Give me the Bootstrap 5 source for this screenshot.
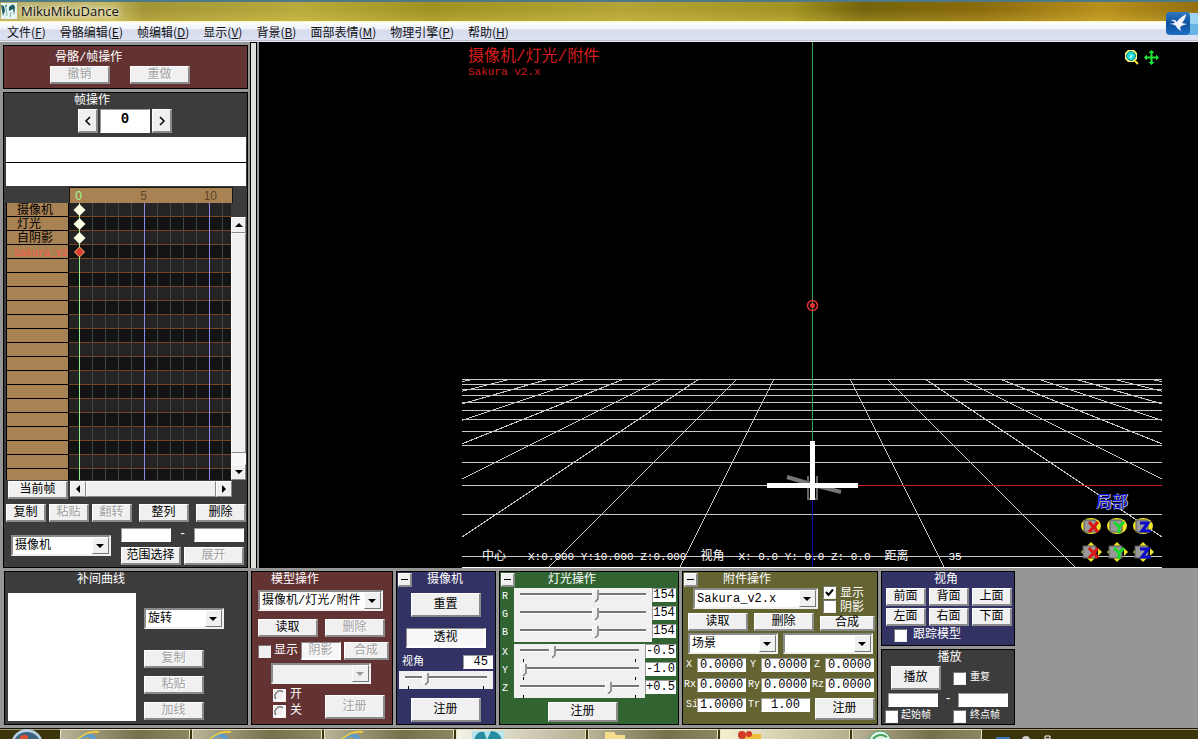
<!DOCTYPE html>
<html lang="zh-CN">
<head>
<meta charset="utf-8">
<meta name="viewport" content="width=device-width, initial-scale=1">
<title>MikuMikuDance</title>
<link href="https://cdn.jsdelivr.net/npm/bootstrap@5.3.0/dist/css/bootstrap.min.css" rel="stylesheet">
<style>
body{font:12px/16px "Liberation Mono","Noto Sans CJK SC",monospace;color:#fff;background:#969696;overflow-x:hidden}
svg{display:block;flex:none}
/* title bar and menu */
.titlebar{height:22px;padding:1px 0 0 1px;border-top:2px solid #4d7a86;border-bottom:1px solid #fff4b8;background:linear-gradient(180deg,transparent 40%,#ffe96a33),linear-gradient(90deg,#b5aa66,#c4b964 9%,#a39537 12%,#b8aa3c 25%,#a09222 36%,#b4a438 52%,#a29322 66%,#75640c 72%,#8b6b0c 82%,#b8901c 92%,#94700f)}
.apptitle{font:13px/16px "Open Sans",sans-serif;color:#111;text-shadow:0 0 5px #fff,0 0 8px #fff}
.menubar{height:20px;background:linear-gradient(#fff,#edf1f9 35%,#d6dbee 40%,#dde2f3 90%,#b0b5c6 91%,#fff)}
.menubar a{font:12px/19px "Noto Sans CJK SC",sans-serif;color:#111;text-decoration:none;padding:0 7px}
.bird{right:0;top:12px;width:33px;height:24px}
/* panels */
.pane{border:1px solid #000;flex:none}
.pane h2{font:inherit;margin:0;height:16px;white-space:nowrap}
.maroon{background:#633232}.dark{background:#3c3c3c}.navy{background:#323264}.green{background:#326432}.olive{background:#646432}
.g3{gap:3px}
.sidecol{width:248px;padding:3px 0 0 3px}
.splitter{width:7px;margin-left:2px;border:1px solid #000;border-bottom:0;background:#e2e0dd}
/* controls */
.key{appearance:none;display:inline-flex;align-items:center;justify-content:center;height:18px;width:60px;padding:0;color:#000;background:#f0f0f0;border:1px solid;border-color:#fff #8a8a8a #8a8a8a #fff;border-right-width:2px;border-bottom-width:2px;white-space:nowrap;flex:none}
.key:disabled{color:#a0a0a0;text-shadow:1px 1px #fff}
.w20{width:20px}.w40{width:40px}.w50{width:50px}.w70{width:70px}.h24{height:24px}
.key.held{border-color:#8a8a8a #fff #fff #8a8a8a;background:#f7f7f7}
.fold{width:14px;height:14px;margin:1px}
.field{height:14px;width:49px;padding:0;border:1px solid;border-color:#999 #fff #fff #999;background:#fff;color:#000;font:inherit;line-height:12px;text-align:center;border-radius:0;flex:none;min-width:0}
.field.wide{width:50px}
.field.rgb{width:24px}
.field.xyz{width:31px}
.combo{position:relative;display:flex;height:21px;border:2px solid;border-color:#8a8a8a #f0f0f0 #f0f0f0 #8a8a8a;background:#fff;flex:none}
.combo select{appearance:none;border:0;background:none;width:100%;padding:0 17px 0 2px;font:inherit;line-height:16px;color:#000;border-radius:0;overflow:hidden}
.combo::before{content:"";position:absolute;right:0;top:0;width:17px;height:17px;background:#f0f0f0;border:1px solid;border-color:#fff #777 #777 #fff;pointer-events:none}
.combo::after{content:"";position:absolute;right:5px;top:7px;border:4px solid transparent;border-top-color:#000;border-bottom:0;pointer-events:none}
.combo.off{background:#f0f0f0}.combo.off::after{border-top-color:#999}
.c80{width:80px}.c90{width:90px}.c100{width:100px}.c125{width:125px}
.tick{appearance:none;width:13px;height:13px;margin:0;background:#fff;border:1px solid;border-color:#777 #eee #eee #777;flex:none}
.tick:checked{background:#fff url("data:image/svg+xml,%3Csvg xmlns='http://www.w3.org/2000/svg' viewBox='0 0 11 11'%3E%3Cpath d='M2 5l2.500 3L9 2.500' fill='none' stroke='%23000' stroke-width='2'/%3E%3C/svg%3E")}
.tick:disabled{background:#f0f0f0}
.dot{appearance:none;width:13px;height:13px;margin:0;background:#f0f0f0 url("data:image/svg+xml,%3Csvg xmlns='http://www.w3.org/2000/svg' viewBox='0 0 13 13'%3E%3Ccircle cx='6.500' cy='6.500' r='5' fill='%23f0f0f0' stroke='%23fff' stroke-width='1.500'/%3E%3Cpath d='M3 10A5 5 0 0 1 10 3' fill='none' stroke='%23777' stroke-width='1.500'/%3E%3C/svg%3E")}
.small10{font-size:10px}
.small11{font-size:11px}
.slide{appearance:none;display:block;height:18px;margin:0;padding:0 6px;background:#f0f0f0;flex:1;min-width:0}
.slide::-webkit-slider-runnable-track{height:12px;margin-bottom:3px;background:linear-gradient(#777,#777) 0 3px/100% 2px no-repeat,linear-gradient(#fff,#fff) 0 5px/100% 1px no-repeat}
.slide::-webkit-slider-thumb{appearance:none;width:7px;height:12px;border:0;border-radius:0;background:url("data:image/svg+xml,%3Csvg xmlns='http://www.w3.org/2000/svg' viewBox='0 0 7 12'%3E%3Cpath d='M.500.500h6V9l-3 3-3-3z' fill='%23f0f0f0' stroke='%23fff'/%3E%3Cpath d='M6 0v9l-3 3' fill='none' stroke='%23777' stroke-width='1.500'/%3E%3C/svg%3E")}
.slide.marks{background:linear-gradient(#000,#000) 9px 100%/1px 3px no-repeat,linear-gradient(#000,#000) calc(100% - 9px) 100%/1px 3px no-repeat,#f0f0f0}
/* frame panel */
.pane .undo{padding-left:51px}
.undorow{padding-left:46px;gap:20px}
.frameno{width:50px;height:24px;font-weight:bold;font-size:14px;padding-bottom:4px}
.info{margin:4px 1px 0 2px;background:#fff;height:49px}
.info div{height:26px;border-bottom:1px solid #000}
.ruler{margin:1px 14px 0 65px;height:16px;border:1px solid #1d150d;border-bottom:0;background:#a98254;color:#5c4428;font-family:"Liberation Sans",sans-serif;display:grid;grid-template-columns:12px 65px 70px}
.ruler span{text-align:right}
.timeline{height:277px;margin:0 1px 0 2px}
.tracks{width:63px;margin:0;padding:0;list-style:none;overflow:hidden;color:#000;border:solid #000;border-width:0 1px;flex:none}
.tracks li{height:14px;padding-left:10px;line-height:17px;background:#a98254;border-bottom:1px solid #000;white-space:nowrap}
.tracks .cur{color:#ff5a46;font-size:10px;padding-left:7px}
.cells{flex:1;background:repeating-linear-gradient(90deg,transparent 0 10px,#444 10px 11px,transparent 11px 13px),repeating-linear-gradient(#242424 0 13px,#7a4424 13px 14px,#131313 14px 27px,#7a4424 27px 28px)}
.vbar{width:15px;margin-top:14px;background:#f8f8f8}
.sb{appearance:none;padding:0;background:#f0f0f0;border:1px solid;border-color:#fff #888 #888 #fff;display:flex;align-items:center;justify-content:center;width:16px;height:16px}
.vbar .sb{width:15px}
.vthumb{height:220px;background:#f0f0f0;border:1px solid;border-color:#fff #888 #888 #fff}
.hbar{width:162px;height:16px;margin-left:2px}
.hthumb{flex:1;background:#f0f0f0;border:1px solid;border-color:#fff #888 #888 #fff}
/* 3D view */
.scene{background:#000;margin-left:2px;padding-right:36px;min-width:0}
.stage{width:700px;flex:none}
.hudtitle{left:6px;top:5px;color:#d21e1e;font-size:16px;line-height:20px}
.hudsub{font-size:11px;line-height:11px}
.hudstatus{left:20px;right:0;bottom:3px;font-size:11px;line-height:16px;white-space:pre}
.hudstatus b{font-weight:normal;font-size:12px}
.viewtools{right:2px;top:7px;gap:3px}
.gizmos{right:5px;bottom:4px;width:78px}
.local{font-size:16px;line-height:22px;color:#1414dc;text-shadow:1px 0 #ccd,0 1px #99b;margin-left:17px}
.gizmos div{display:grid;grid-template-columns:repeat(3,26px);row-gap:2px}
/* lower panels */
.lower{padding:3px 0 3px 4px}
.lower .pane{min-height:154px}
.lower .half{min-height:0}
.curve{width:128px;height:128px;background:#fff}
.letters{width:12px}
.prow{display:grid;grid-template-columns:11px 49px 15px 49px 15px 49px;line-height:14px;margin-top:6px}
.prow label{overflow:visible;white-space:nowrap}
.prow.shift{margin-left:-2px;grid-template-columns:13px 49px 15px 49px 15px 49px}
/* task bar */
.taskbar{height:11px;flex:none;overflow:hidden;background:linear-gradient(#14120a 1px,#a59b72 1px 2px,#3c350c 2px);padding-left:12px}
.taskbtn{width:130px;height:10px;margin:1px 2px 0 0;padding-left:15px;border:1px solid #e9e4c4;border-bottom:0;background:linear-gradient(90deg,#b9b499,#77704c 60%,#8d8663)}
</style>
</head>
<body>
<div class="d-flex flex-column min-vh-100">
<header class="position-relative">
  <div class="titlebar d-flex">
    <svg width="16" height="16" viewBox="0 0 16 16"><path fill="#e6f4f2" d="M0 0h16v16H0z"/><path d="M0 2l3 1 1 5-2 5zM8 4q5-5 6 0l-1 8-1-6-4 2zM4 3l2-2-1 4z" fill="#1c5c62"/><path d="M5 5l1 8M10 9l-1 5" stroke="#78b4b4" fill="none"/></svg>
    <span class="apptitle ms-1">MikuMikuDance</span>
  </div>
  <nav class="menubar d-flex">
    <a href="#">文件(<u>F</u>)</a><a href="#">骨骼编辑(<u>E</u>)</a><a href="#">帧编辑(<u>D</u>)</a><a href="#">显示(<u>V</u>)</a><a href="#">背景(<u>B</u>)</a><a href="#">面部表情(<u>M</u>)</a><a href="#">物理引擎(<u>P</u>)</a><a href="#">帮助(<u>H</u>)</a>
  </nav>
  <svg class="bird position-absolute" viewBox="0 0 33 24"><defs><linearGradient id="bg" x2="0" y2="1"><stop stop-color="#2f79c4"/><stop offset=".5" stop-color="#0c4f9e"/><stop offset="1" stop-color="#1d6fc4"/></linearGradient></defs><path d="M20 1h13v22H20z" fill="#9cd2f2"/><path d="M20 12h13v11H20z" fill="#68b4e4"/><rect x="1" width="24" height="23" rx="4" fill="url(#bg)"/><path d="M6 8q4-1 6 2 1-3 9-8-1 6-4 9l5 1-6 2q-2 3 1 6l-5-4q-1-4-8-4l6-1q-1-2-4-3z" fill="#f2f6fa"/></svg>
</header>

<main class="d-flex flex-grow-1">
  <div class="sidecol d-flex flex-column g3">
    <section class="pane maroon pb-1">
      <h2 class="undo mt-1">骨骼/帧操作</h2>
      <div class="undorow d-flex"><button class="key" disabled>撤销</button><button class="key" disabled>重做</button></div>
    </section>
    <section class="pane dark flex-grow-1">
      <h2 style="padding-left:70px">帧操作</h2>
      <div class="d-flex" style="gap:2px;padding-left:74px"><button class="key w20 h24" aria-label="上一帧"><svg width="8" height="10"><path d="M6 1L2 5l4 4" fill="none" stroke="#000" stroke-width="1.500"/></svg></button><input class="field frameno" value="0" aria-label="帧"><button class="key w20 h24" aria-label="下一帧"><svg width="8" height="10"><path d="M2 1l4 4-4 4" fill="none" stroke="#000" stroke-width="1.500"/></svg></button></div>
      <div class="info"><div></div></div>
      <div class="ruler"><span style="color:#96ff8c">0</span><span>5</span><span>10</span></div>
      <div class="timeline d-flex">
        <ul class="tracks"><li>摄像机</li><li>灯光</li><li>自阴影</li><li class="cur">Sakura_v2</li><li></li><li></li><li></li><li></li><li></li><li></li><li></li><li></li><li></li><li></li><li></li><li></li><li></li><li></li><li></li><li></li></ul>
        <div class="cells"><svg width="161" height="277"><g shape-rendering="crispEdges"><path d="M10 0h1v277h-1z" fill="#8cf08c"/><path d="M75 0h1v277h-1zM140 0h1v277h-1z" fill="#8c8ce6"/></g><g fill="#ffffe6"><path id="kf" d="M10.500 1l6 6-6 6-6-6z"/><use href="#kf" y="14"/><use href="#kf" y="28"/></g><path d="M10.500 44l5 5-5 5-5-5z" fill="#dc3c32" stroke="#ffb46e"/></svg></div>
        <div class="vbar d-flex flex-column"><button class="sb" aria-label="向上"><svg width="8" height="4"><path d="M0 4l4-4 4 4z"/></svg></button><div class="vthumb"></div><button class="sb mt-auto" aria-label="向下"><svg width="8" height="4"><path d="M0 0l4 4 4-4z"/></svg></button></div>
      </div>
      <div class="d-flex" style="margin:1px 0 0 4px"><button class="key">当前帧</button><div class="hbar d-flex"><button class="sb" aria-label="向左"><svg width="4" height="8"><path d="M4 0v8L0 4z"/></svg></button><div class="hthumb"></div><button class="sb" aria-label="向右"><svg width="4" height="8"><path d="M0 0v8l4-4z"/></svg></button></div></div>
      <div class="d-flex g3 ps-0" style="margin:5px 0 0 2px"><button class="key w40">复制</button><button class="key w40" disabled>粘贴</button><button class="key w40" disabled>翻转</button><button class="key w50 ms-1">整列</button><button class="key w50 ms-1">删除</button></div>
      <div class="d-flex" style="margin:6px 2px 0 7px">
        <div class="combo c100" style="margin-top:7px"><select aria-label="轨道"><option>摄像机</option></select></div>
        <div style="margin-left:10px"><div class="d-flex lh-1"><input class="field wide" aria-label="起点"><span class="px-2 text-center">-</span><input class="field wide" aria-label="终点"></div><div class="d-flex g3" style="margin:5px 0 2px"><button class="key">范围选择</button><button class="key" disabled>展开</button></div></div>
      </div>
    </section>
  </div>
  <div class="splitter"></div>
  <section class="scene flex-grow-1 d-flex justify-content-end position-relative" aria-label="视图">
    <div class="stage position-relative">
      <svg width="700" height="526" viewBox="0 0 700 526">
        <g stroke="#c8c8c8" fill="none" shape-rendering="crispEdges">
          <path d="M0 337.500h700M0 342.500h700M0 347.500h700M0 353.500h700M0 360.500h700M0 368.500h700M0 377.500h700M0 389.500h700M0 403.500h700M0 420.500h700M0 443.500h350M0 472.500h700M0 514.500h700"/>
          <path d="M0 525.500h700" stroke="#fff"/>
          <path d="M388 337L482 525M425 337L613 525M463 337L745 525M500 337L876 525M538 337L1008 525M576 337L1140 525M613 337L1271 525M651 337L1403 525M688 337L1534 525M312 337L218 525M275 337L87 525M237 337L-45 525M200 337L-176 525M162 337L-308 525M124 337L-440 525M87 337L-571 525M49 337L-703 525M12 337L-834 525"/>
        </g>
        <path d="M350 0h1v400h-1z" fill="#32a046"/><path d="M350 458h1v67h-1z" fill="#0a0ab4"/><path d="M396 443h304v1H396z" fill="#c81e1e"/>
        <path d="M325 435l27 8 27 7" stroke="#777" stroke-width="4" fill="none"/><path d="M346 434v23h9v-23" stroke="#666" fill="none" stroke-width="2"/>
        <path d="M348 399h5v59h-5zM305 441h91v5h-91z" fill="#fff"/>
        <circle cx="350.500" cy="263.500" r="5" fill="none" stroke="#e63232" stroke-width="1.500"/><circle cx="350.500" cy="263.500" r="2.500" fill="#e63232"/>
      </svg>
      <div class="hudtitle position-absolute">摄像机/灯光/附件<div class="hudsub">Sakura v2.x</div></div>
      <div class="hudstatus position-absolute d-flex"><b>中心</b><span style="margin-left:22px">X:0.000 Y:10.000 Z:0.000</span><b style="margin-left:14px">视角</b><span style="margin-left:14px">X: 0.0 Y: 0.0 Z: 0.0</span><b style="margin-left:14px">距离</b><span style="margin-left:40px">35</span></div>
      <div class="viewtools position-absolute d-flex">
        <svg width="17" height="17" viewBox="0 0 17 17"><path d="M5 1h6l3 3v6l-3 3H5l-3-3V4z" fill="#ffff78"/><circle cx="8" cy="7" r="4.500" fill="#1edcdc" stroke="#1e7882"/><path d="M9 6l-2 3" stroke="#b4ffff" stroke-width="2"/><path d="M12 12l3 3" stroke="#ffe632" stroke-width="2"/></svg>
        <svg width="17" height="17" viewBox="0 0 17 17"><path d="M8.500 2v13M2 8.500h13" stroke="#1ee632" stroke-width="2"/><path d="M8.500 1l3 3h-6zM8.500 16l3-3h-6zM1 8.500l3-3v6zM16 8.500l-3-3v6z" fill="#1ee632"/></svg>
      </div>
      <div class="gizmos position-absolute"><span class="local">局部</span>
        <div>
          <svg width="24" height="24" viewBox="0 0 24 24"><defs><g id="rot"><ellipse cx="12" cy="12" rx="10" ry="8" fill="#f0e628"/><rect x="5" y="6" width="12" height="12" rx="1" fill="#999" stroke="#555"/></g><g id="mov"><path d="M12 2l4 4h-8zM12 22l4-4h-8zM2 12l4-4v8zM23 12l-4-4v8z" fill="#f0e628"/><rect x="4" y="6" width="13" height="12" fill="#999" stroke="#555"/></g></defs><use href="#rot"/><path d="M10 8l9 10M19 8L10 18" stroke="#dc1414" stroke-width="3"/></svg>
          <svg width="24" height="24" viewBox="0 0 24 24"><use href="#rot"/><path d="M9 8l5 5 5-5M14 12v7" stroke="#14dc28" stroke-width="3" fill="none"/></svg>
          <svg width="24" height="24" viewBox="0 0 24 24"><use href="#rot"/><path d="M9 9h8l-6 8h9" stroke="#0a0ac8" stroke-width="3" fill="none"/></svg>
          <svg width="24" height="24" viewBox="0 0 24 24"><use href="#mov"/><path d="M10 8l9 10M19 8L10 18" stroke="#dc1414" stroke-width="3"/></svg>
          <svg width="24" height="24" viewBox="0 0 24 24"><use href="#mov"/><path d="M9 8l5 5 5-5M14 12v7" stroke="#14dc28" stroke-width="3" fill="none"/></svg>
          <svg width="24" height="24" viewBox="0 0 24 24"><use href="#mov"/><path d="M9 9h8l-6 8h9" stroke="#0a0ac8" stroke-width="3" fill="none"/></svg>
        </div>
      </div>
    </div>
  </section>
</main>

<div class="lower d-flex g3">
  <section class="pane dark" style="width:244px">
    <h2 style="padding-left:72px">补间曲线</h2>
    <div class="d-flex" style="padding:5px 0 0 3px"><div class="curve"></div>
      <div class="ms-2 d-flex flex-column" style="gap:8px;padding-top:15px"><div class="combo c80" style="margin-bottom:13px"><select aria-label="曲线"><option>旋转</option></select></div><button class="key" disabled>复制</button><button class="key" disabled>粘贴</button><button class="key" disabled>加线</button></div></div>
  </section>

  <section class="pane maroon" style="width:142px;padding-left:6px">
    <h2 style="padding-left:13px">模型操作</h2>
    <div class="combo c125" style="margin-top:2px"><select aria-label="模型"><option>摄像机/灯光/附件</option></select></div>
    <div class="d-flex" style="gap:7px;margin-top:8px"><button class="key">读取</button><button class="key" disabled>删除</button></div>
    <div class="d-flex align-items-center" style="gap:3px;margin-top:5px"><input type="checkbox" class="tick" id="mshow" disabled><label for="mshow">显示</label><button class="key w40 held" disabled>阴影</button><button class="key" style="width:45px" disabled>合成</button></div>
    <div class="combo c100 off" style="margin:3px 0 3px 13px"><select disabled aria-label="附属"><option></option></select></div>
    <div class="d-flex align-items-end"><div style="width:52px;padding-left:15px"><div class="d-flex align-items-center"><input type="radio" name="oo" class="dot" id="on"><label class="ps-1" for="on">开</label></div><div class="d-flex align-items-center"><input type="radio" name="oo" class="dot" id="of"><label class="ps-1" for="of">关</label></div></div><button class="key h24" style="margin-left:15px" disabled>注册</button></div>
  </section>

  <section class="pane navy" style="width:100px">
    <div class="d-flex"><button class="key fold" aria-label="折叠"><svg width="7" height="1"><path d="M0 0h7v1H0z"/></svg></button><h2 style="padding-left:14px">摄像机</h2></div>
    <div class="d-flex flex-column align-items-center"><button class="key w70 h24" style="margin-top:5px">重置</button><button class="key held c80" style="height:20px;margin-top:11px">透视</button></div>
    <div class="d-flex justify-content-between align-items-center" style="padding:7px 2px 0 5px"><label class="small11 lh-1" for="fov">视角</label><input class="field text-end pe-1" style="width:30px" id="fov" value="45"></div>
    <div class="d-flex" style="padding:2px 2px 0"><input type="range" class="slide marks" min="0" max="125" value="28" aria-label="视角"></div>
    <div class="text-center" style="margin-top:9px"><button class="key w70 h24">注册</button></div>
  </section>

  <section class="pane green" style="width:180px">
    <div class="d-flex"><button class="key fold" aria-label="折叠"><svg width="7" height="1"><path d="M0 0h7v1H0z"/></svg></button><h2 style="padding-left:32px">灯光操作</h2></div>
    <div style="line-height:18px;padding:0 2px">
      <div class="d-flex"><label class="letters small10" for="lr">R</label><input id="lr" type="range" class="slide" max="255" value="154"><input class="field rgb" value="154" aria-label="R"></div>
      <div class="d-flex"><label class="letters small10" for="lg">G</label><input id="lg" type="range" class="slide" max="255" value="154"><input class="field rgb" value="154" aria-label="G"></div>
      <div class="d-flex"><label class="letters small10" for="lb">B</label><input id="lb" type="range" class="slide" max="255" value="154"><input class="field rgb" value="154" aria-label="B"></div>
      <div class="d-flex" style="margin-top:2px"><label class="letters small10" for="lx">X</label><input id="lx" type="range" class="slide marks" min="-100" value="-48"><input class="field xyz" value="-0.5" aria-label="X"></div>
      <div class="d-flex"><label class="letters small10" for="ly">Y</label><input id="ly" type="range" class="slide marks" min="-100" value="-100"><input class="field xyz" value="-1.0" aria-label="Y"></div>
      <div class="d-flex"><label class="letters small10" for="lz">Z</label><input id="lz" type="range" class="slide marks" min="-100" value="52"><input class="field xyz" value="+0.5" aria-label="Z"></div>
    </div>
    <div style="padding:4px 0 0 48px"><button class="key w70" style="height:20px">注册</button></div>
  </section>

  <section class="pane olive" style="width:196px">
    <div class="d-flex"><button class="key fold" aria-label="折叠"><svg width="7" height="1"><path d="M0 0h7v1H0z"/></svg></button><h2 style="padding-left:24px">附件操作</h2></div>
    <div class="d-flex" style="padding-left:10px;height:25px"><div class="combo c125"><select aria-label="附件"><option>Sakura_v2.x</option></select></div>
      <div style="margin:-2px 0 0 5px"><div class="d-flex" style="height:14px"><input type="checkbox" class="tick" id="ashow" checked><label class="ms-1" for="ashow">显示</label></div><div class="d-flex"><input type="checkbox" class="tick" id="ashade"><label class="ms-1" for="ashade">阴影</label></div></div></div>
    <div class="d-flex align-items-end" style="gap:6px;padding-left:5px"><button class="key">读取</button><button class="key">删除</button><button class="key" style="width:55px;height:15px">合成</button></div>
    <div class="d-flex" style="gap:5px;padding:2px 0 0 5px"><div class="combo c90"><select aria-label="目标"><option>场景</option></select></div><div class="combo c90"><select aria-label="骨骼"><option></option></select></div></div>
    <div style="padding-left:3px">
      <div class="prow" style="margin-top:4px"><label class="small10" for="px">X</label><input class="field" id="px" value="0.0000"><label class="small10 ps-1" for="py">Y</label><input class="field" id="py" value="0.0000"><label class="small10 ps-1" for="pz">Z</label><input class="field" id="pz" value="0.0000"></div>
      <div class="prow shift"><label class="small10" for="rx">Rx</label><input class="field" id="rx" value="0.0000"><label class="small10" style="padding-left:2px" for="ry">Ry</label><input class="field" id="ry" value="0.0000"><label class="small10" style="padding-left:2px" for="rz">Rz</label><input class="field" id="rz" value="0.0000"></div>
      <div class="d-flex"><div class="prow" style="grid-template-columns:11px 49px 15px 49px"><label class="small10" for="si">Si</label><input class="field" id="si" value="1.0000"><label class="small10" style="padding-left:2px" for="tr">Tr</label><input class="field" id="tr" value="1.00"></div><button class="key" style="height:22px;margin:6px 0 0 5px">注册</button></div>
    </div>
  </section>

  <div class="d-flex flex-column g3" style="width:134px">
    <section class="pane navy half" style="padding-left:4px;height:75px">
      <h2 class="text-center pe-2">视角</h2>
      <div class="d-flex flex-wrap" style="gap:2px 3px"><button class="key w40">前面</button><button class="key w40">背面</button><button class="key w40">上面</button><button class="key w40">左面</button><button class="key w40">右面</button><button class="key w40">下面</button></div>
      <div class="d-flex align-items-center ps-2" style="margin-top:1px"><input type="checkbox" class="tick" id="follow"><label style="padding-left:6px" for="follow">跟踪模型</label></div>
    </section>
    <section class="pane dark half flex-grow-1" style="padding-left:3px">
      <h2 class="text-center">播放</h2>
      <div class="d-flex align-items-center"><button class="key w50 h24" style="margin:0 12px 0 6px">播放</button><input type="checkbox" class="tick" id="loop"><label class="small10 ps-1" for="loop">重复</label></div>
      <div class="d-flex lh-1" style="padding:3px 0 0 3px"><input class="field wide" aria-label="起始"><span class="text-center" style="width:20px">-</span><input class="field wide" aria-label="结束"></div>
      <div class="d-flex align-items-center" style="padding-top:1px"><input type="checkbox" class="tick" id="st"><label class="small10" style="width:55px;padding-left:3px" for="st">起始帧</label><input type="checkbox" class="tick" id="en"><label class="small10 ps-1" for="en">终点帧</label></div>
    </section>
  </div>
</div>

<footer class="taskbar d-flex">
  <svg width="48" height="11" viewBox="0 0 48 11"><circle cx="15" cy="17" r="16" fill="#b9d2e1"/><circle cx="15" cy="18" r="14" fill="#3c6482"/><path d="M8 9q4-4 8-1v4H7z" fill="#e1502d"/></svg>
  <div class="taskbtn"><svg width="30" height="10"><circle cx="11" cy="14" r="9" fill="none" stroke="#5b9bd0" stroke-width="4"/><path d="M2 9Q12 0 23 2" stroke="#f0c83c" stroke-width="2" fill="none"/></svg></div>
  <div class="taskbtn"><svg width="30" height="10"><circle cx="11" cy="14" r="9" fill="none" stroke="#5b9bd0" stroke-width="4"/><path d="M2 9Q12 0 23 2" stroke="#f0c83c" stroke-width="2" fill="none"/></svg></div>
  <div class="taskbtn"><svg width="30" height="10"><circle cx="11" cy="14" r="9" fill="none" stroke="#5b9bd0" stroke-width="4"/><path d="M2 9Q12 0 23 2" stroke="#f0c83c" stroke-width="2" fill="none"/></svg></div>
  <div class="taskbtn" style="background:linear-gradient(90deg,#f4f3e8,#b4ae91)"><svg width="34" height="10"><path d="M0 1h32v9H0z" fill="#b4e6eb"/><path d="M2 10q3-10 10-8l3 8 4-9q8 0 11 9" fill="#288ca0"/></svg></div>
  <div class="taskbtn"><svg width="30" height="10"><path d="M1 2h9l2 3h9v5H1z" fill="#f5dc8c"/></svg></div>
  <div class="taskbtn" style="background:linear-gradient(90deg,#f4f0d0,#b4ae91)"><svg width="30" height="10"><path d="M7 4h18v6H7z" fill="#f0be3c"/><circle cx="6" cy="5" r="4" fill="#d23c28"/><circle cx="13" cy="4" r="3" fill="#d23c28"/></svg></div>
  <div class="taskbtn"><svg width="30" height="10"><circle cx="12" cy="12" r="11" fill="#e1f5e6" stroke="#46a064"/><path d="M5 9q6-7 14-2" stroke="#46a064" stroke-width="2" fill="none"/></svg></div>
  <svg class="ms-2" width="64" height="11"><path d="M4 9h14v2H4z" fill="#3c78b4"/><circle cx="34" cy="12" r="4" fill="#ccc"/><path d="M53 8h5v3h-5z" fill="none" stroke="#fff"/></svg>
</footer>
</div>
<script src="https://cdn.jsdelivr.net/npm/bootstrap@5.3.0/dist/js/bootstrap.bundle.min.js"></script>
</body>
</html>
